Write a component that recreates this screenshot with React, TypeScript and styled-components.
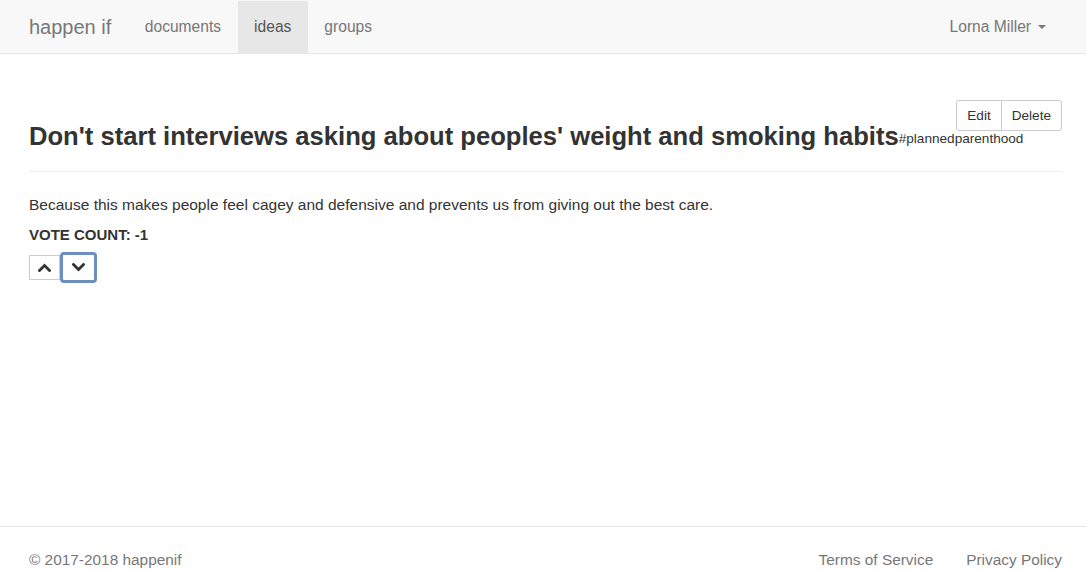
import React from "react";
import styled, { createGlobalStyle } from "styled-components";

const Global = createGlobalStyle`
  html, body { margin: 0; padding: 0; background: #fff; }
  body { font-family: "Liberation Sans", Arial, sans-serif; font-size: 15.5px; color: #333; line-height: 22px; }
  * { box-sizing: border-box; }
`;

const Page = styled.div`
  min-height: 572px;
  display: flex;
  flex-direction: column;
`;

const Navbar = styled.nav`
  height: 54px;
  background: #f8f8f8;
  border-bottom: 1px solid #e7e7e7;
  display: flex;
  align-items: stretch;
  padding: 1px 24px 0 29px;
`;

const Brand = styled.a`
  font-size: 20px;
  color: #777;
  display: flex;
  align-items: center;
  margin-right: 17px;
  text-decoration: none;
`;

const NavLink = styled.a<{ $active?: boolean }>`
  display: flex;
  align-items: center;
  padding: 0 16.5px;
  font-size: 15.6px;
  color: ${(p) => (p.$active ? "#555" : "#777")};
  background: ${(p) => (p.$active ? "#e7e7e7" : "transparent")};
  text-decoration: none;
`;

const Spacer = styled.div`
  flex: 1;
`;

const UserMenu = styled.a`
  display: flex;
  align-items: center;
  font-size: 15.6px;
  color: #777;
  padding-right: 16px;
`;

const Caret = styled.span`
  display: inline-block;
  width: 0;
  height: 0;
  margin-left: 7px;
  border-top: 4px solid #777;
  border-left: 4px solid transparent;
  border-right: 4px solid transparent;
`;

const Main = styled.main`
  flex: 1;
  padding: 45px 24px 0 29px;
`;

const Header = styled.div`
  position: relative;
  border-bottom: 1px solid #eee;
  padding: 23px 0 18px;
`;

const Title = styled.h1`
  margin: 0;
  font-size: 25.6px;
  font-weight: bold;
  line-height: 28px;
  color: #333;
  white-space: nowrap;
`;

const Tag = styled.small`
  font-size: 13.6px;
  font-weight: normal;
  color: #333;
  vertical-align: 2px;
`;

const BtnGroup = styled.div`
  position: absolute;
  top: 1px;
  right: 0;
  display: flex;
`;

const Btn = styled.button<{ $first?: boolean }>`
  font-family: inherit;
  font-size: 13.6px;
  color: #333;
  background: #fff;
  border: 1px solid #ccc;
  height: 31px;
  padding: 0 10px;
  border-radius: ${(p) => (p.$first ? "3px 0 0 3px" : "0 3px 3px 0")};
  margin-left: ${(p) => (p.$first ? "0" : "-1px")};
`;

const Body = styled.p`
  margin: 22px 0 8px;
`;

const Count = styled.div`
  font-weight: bold;
  font-size: 15px;
  margin-bottom: 6px;
`;

const Votes = styled.div`
  display: flex;
  align-items: center;
`;

const VoteBtn = styled.button<{ $focus?: boolean }>`
  width: ${(p) => (p.$focus ? "37px" : "31px")};
  height: ${(p) => (p.$focus ? "31px" : "25px")};
  background: #fff;
  border: ${(p) => (p.$focus ? "3px solid #6c8fc0" : "1px solid #ccc")};
  border-radius: ${(p) => (p.$focus ? "4px" : "0")};
  display: flex;
  align-items: center;
  justify-content: center;
  padding: 0;
`;

const Footer = styled.footer`
  border-top: 1px solid #e7e7e7;
  height: 46px;
  display: flex;
  align-items: flex-end;
  justify-content: space-between;
  padding: 0 24px 1px 29px;
  font-size: 15.4px;
  color: #777;
`;

const FooterLinks = styled.div`
  display: flex;
  gap: 33px;
`;

const Chevron = ({ up }: { up?: boolean }) => (
  <svg width="13" height="9" viewBox="0 0 13 9">
    <path
      d={up ? "M1.5 7.5 L6.5 2.5 L11.5 7.5" : "M1.5 1.5 L6.5 6.5 L11.5 1.5"}
      fill="none"
      stroke="#333"
      strokeWidth="2.8"
      strokeLinecap="square"
    />
  </svg>
);

export default function App() {
  return (
    <Page>
      <Global />
      <Navbar>
        <Brand>happen if</Brand>
        <NavLink>documents</NavLink>
        <NavLink $active>ideas</NavLink>
        <NavLink>groups</NavLink>
        <Spacer />
        <UserMenu>
          Lorna Miller
          <Caret />
        </UserMenu>
      </Navbar>
      <Main>
        <Header>
          <Title>
            Don't start interviews asking about peoples' weight and smoking habits
            <Tag>#plannedparenthood</Tag>
          </Title>
          <BtnGroup>
            <Btn $first>Edit</Btn>
            <Btn>Delete</Btn>
          </BtnGroup>
        </Header>
        <Body>
          Because this makes people feel cagey and defensive and prevents us from giving out the best care.
        </Body>
        <Count>VOTE COUNT: -1</Count>
        <Votes>
          <VoteBtn>
            <Chevron up />
          </VoteBtn>
          <VoteBtn $focus>
            <Chevron />
          </VoteBtn>
        </Votes>
      </Main>
      <Footer>
        <span>© 2017-2018 happenif</span>
        <FooterLinks>
          <span>Terms of Service</span>
          <span>Privacy Policy</span>
        </FooterLinks>
      </Footer>
    </Page>
  );
}
